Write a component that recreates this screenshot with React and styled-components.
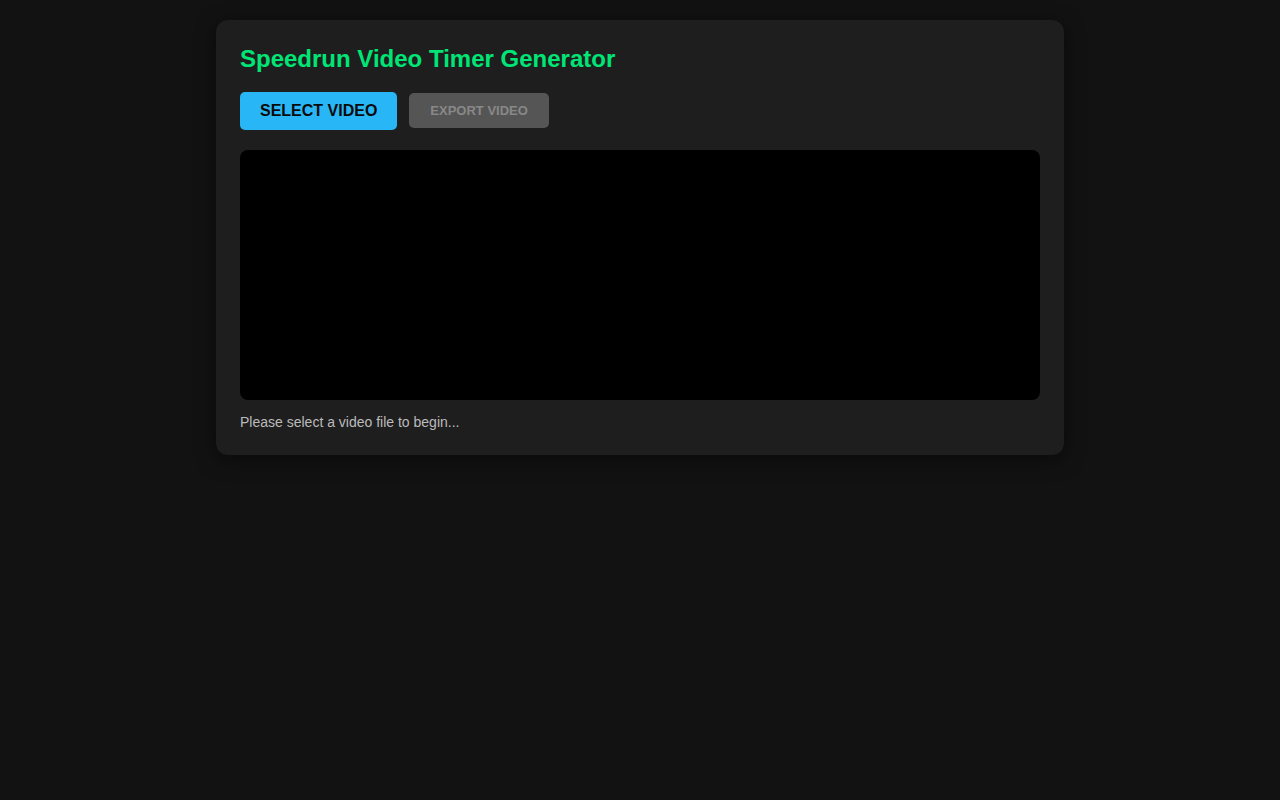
import React from 'react';
import styled, { createGlobalStyle } from 'styled-components';

const GlobalStyle = createGlobalStyle`
  html, body {
    margin: 0;
    padding: 0;
    background: #121212;
    font-family: "Liberation Sans", Arial, sans-serif;
    color: #e0e0e0;
  }
`;

const Page = styled.div`
  display: flex;
  justify-content: center;
  align-items: flex-start;
  padding-top: 20px;
  min-height: 100vh;
  box-sizing: border-box;
`;

const Card = styled.div`
  width: 848px;
  box-sizing: border-box;
  padding: 24px;
  background: #1e1e1e;
  border-radius: 12px;
  box-shadow: 0 4px 20px rgba(0, 0, 0, 0.5);
  display: flex;
  flex-direction: column;
  align-items: flex-start;
`;

const Title = styled.h1`
  margin: 0 0 20px;
  font-size: 24px;
  line-height: 28px;
  padding-top: 1px;
  height: 27px;
  font-weight: bold;
  color: #00e676;
`;

const Controls = styled.div`
  display: flex;
  align-items: flex-start;
  gap: 12px;
  margin-bottom: 20px;
`;

const Button = styled.button`
  border: none;
  border-radius: 5px;
  font-family: inherit;
  font-weight: bold;
  text-transform: uppercase;
  cursor: pointer;
  margin-top: ${p => (p.$primary ? '0' : '1px')};
  height: ${p => (p.$primary ? '38px' : '35px')};
  padding: ${p => (p.$primary ? '0 20px' : '0 21px')};
  font-size: ${p => (p.$primary ? '16px' : '13px')};
  background: ${p => (p.$primary ? '#29b6f6' : '#555555')};
  color: ${p => (p.$primary ? '#0a0a0a' : '#888888')};

  &:disabled {
    cursor: default;
  }
`;

const VideoBox = styled.div`
  width: 100%;
  height: 250px;
  background: #000;
  border-radius: 8px;
`;

const Status = styled.p`
  margin: 14px 0 0;
  font-size: 14px;
  line-height: 17px;
  color: #bbbbbb;
`;

export default function App() {
  return (
    <>
      <GlobalStyle />
      <Page>
        <Card>
          <Title>Speedrun Video Timer Generator</Title>
          <Controls>
            <Button $primary>Select Video</Button>
            <Button disabled>Export Video</Button>
          </Controls>
          <VideoBox />
          <Status>Please select a video file to begin...</Status>
        </Card>
      </Page>
    </>
  );
}
